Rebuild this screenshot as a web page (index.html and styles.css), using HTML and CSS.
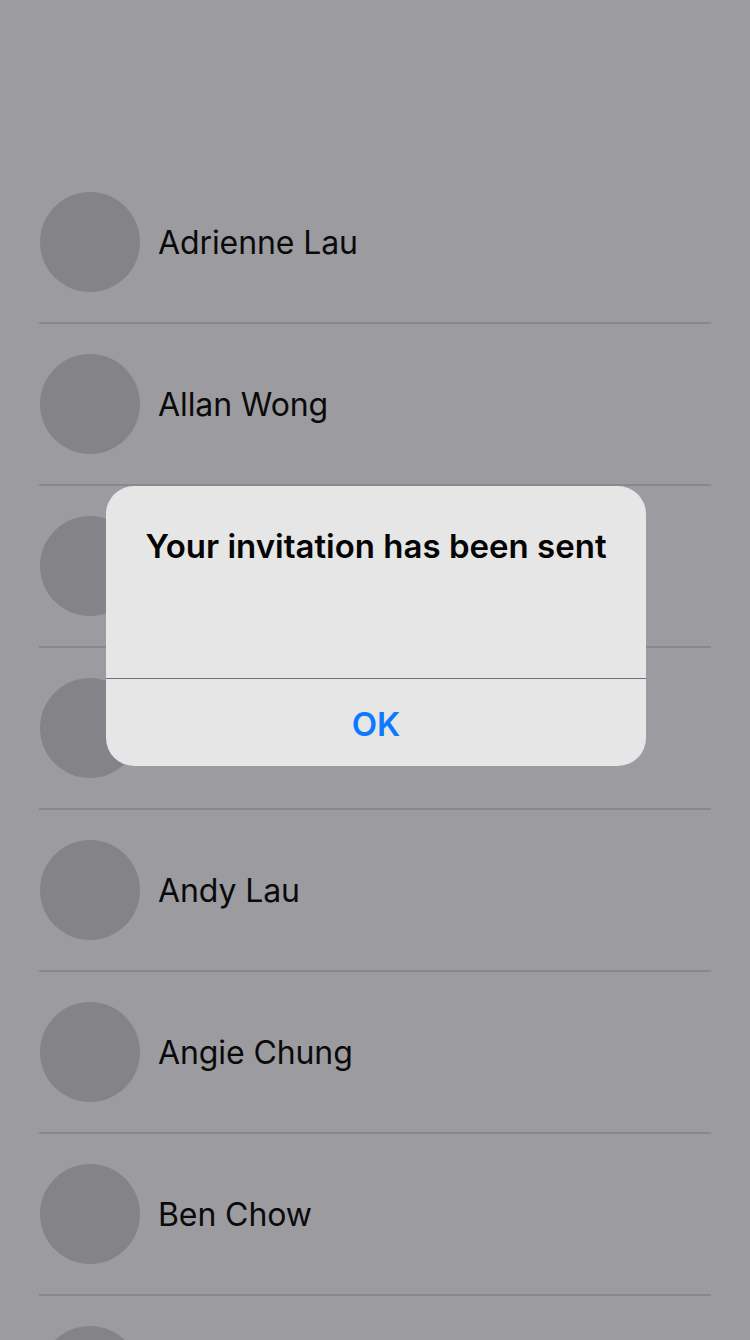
FILE: index.html
```html
<!DOCTYPE html>
<html>
<head>
<meta charset="utf-8">
<link rel="stylesheet" href="styles.css">
</head>
<body>
<div class="screen">
  <div class="header"></div>
  <ul class="list">
    <li class="row"><div class="avatar"></div><span class="name">Adrienne Lau</span></li>
    <li class="row"><div class="avatar"></div><span class="name">Allan Wong</span></li>
    <li class="row"><div class="avatar"></div><span class="name"></span></li>
    <li class="row"><div class="avatar"></div><span class="name"></span></li>
    <li class="row"><div class="avatar"></div><span class="name">Andy Lau</span></li>
    <li class="row"><div class="avatar"></div><span class="name">Angie Chung</span></li>
    <li class="row"><div class="avatar"></div><span class="name">Ben Chow</span></li>
    <li class="row"><div class="avatar"></div><span class="name"></span></li>
  </ul>
  <div class="alert">
    <div class="alert-body">
      <div class="alert-title">Your invitation has been sent</div>
    </div>
    <div class="alert-button">OK</div>
  </div>
</div>
</body>
</html>
```

FILE: styles.css
```css
html, body {
  margin: 0;
  padding: 0;
}
body {
  background: #9c9ba0;
  font-family: Inter, "Liberation Sans", sans-serif;
}
.screen {
  position: relative;
  width: 750px;
  height: 1340px;
  overflow: hidden;
  background: #9c9ba0;
}
.header {
  height: 162px;
}
.list {
  list-style: none;
  margin: 0;
  padding: 0;
}
.row {
  display: flex;
  align-items: center;
  gap: 18px;
  height: 160px;
  margin: 0 39px 0 39px;
  padding-left: 1px;
  border-bottom: 2px solid #89888d;
}
.avatar {
  width: 100px;
  height: 100px;
  border-radius: 50%;
  background: #848388;
  flex: none;
}
.name {
  font-size: 32px;
  color: #0a0a0a;
  letter-spacing: -0.1px;
}
.alert {
  position: absolute;
  left: 106px;
  top: 486px;
  width: 540px;
  height: 280px;
  border-radius: 28px;
  background: #e6e6e6;
  display: flex;
  flex-direction: column;
  overflow: hidden;
}
.alert-body {
  height: 192px;
  border-bottom: 1px solid #6f6e86;
  display: flex;
  justify-content: center;
}
.alert-title {
  margin-top: 40px;
  font-size: 33px;
  font-weight: 600;
  color: #050505;
  letter-spacing: 0px;
  line-height: 40px;
}
.alert-button {
  flex: 1;
  display: flex;
  align-items: center;
  justify-content: center;
  padding-top: 3px;
  font-size: 33px;
  font-weight: 600;
  color: #0a7aff;
}
```
